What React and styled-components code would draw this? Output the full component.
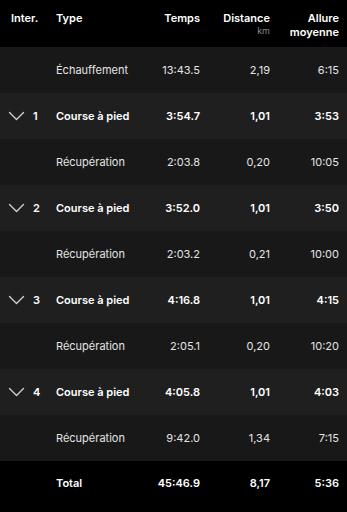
import styled, { createGlobalStyle } from "styled-components";

const GlobalStyle = createGlobalStyle`
  body {
    margin: 0;
    background: #000;
    font-family: Inter, "Noto Sans", "Liberation Sans", sans-serif;
    -webkit-font-smoothing: antialiased;
  }
`;

const rows = [
  { type: "Échauffement", time: "13:43.5", dist: "2,19", pace: "6:15" },
  { lap: 1, type: "Course à pied", time: "3:54.7", dist: "1,01", pace: "3:53" },
  { type: "Récupération", time: "2:03.8", dist: "0,20", pace: "10:05" },
  { lap: 2, type: "Course à pied", time: "3:52.0", dist: "1,01", pace: "3:50" },
  { type: "Récupération", time: "2:03.2", dist: "0,21", pace: "10:00" },
  { lap: 3, type: "Course à pied", time: "4:16.8", dist: "1,01", pace: "4:15" },
  { type: "Récupération", time: "2:05.1", dist: "0,20", pace: "10:20" },
  { lap: 4, type: "Course à pied", time: "4:05.8", dist: "1,01", pace: "4:03" },
  { type: "Récupération", time: "9:42.0", dist: "1,34", pace: "7:15" },
];

function Chevron() {
  return (
    <svg width="17" height="10" viewBox="0 0 17 10">
      <path
        d="M1.5 1.5 L8.5 8.5 L15.5 1.5"
        fill="none"
        stroke="#cfcfcf"
        strokeWidth="1.4"
        strokeLinecap="round"
        strokeLinejoin="round"
      />
    </svg>
  );
}

export default function App() {
  return (
    <Table>
      <GlobalStyle />
      <Header>
        <Cell>Inter.</Cell>
        <Cell>Type</Cell>
        <Num>Temps</Num>
        <Num>
          Distance
          <Unit>km</Unit>
        </Num>
        <Num>
          Allure
          <br />
          moyenne
        </Num>
      </Header>
      {rows.map((r, i) => (
        <Row key={i} $lap={!!r.lap}>
          <LapCell>
            {r.lap && (
              <>
                <Chevron />
                <span>{r.lap}</span>
              </>
            )}
          </LapCell>
          <Cell>{r.type}</Cell>
          <Num>{r.time}</Num>
          <Num>{r.dist}</Num>
          <Num>{r.pace}</Num>
        </Row>
      ))}
      <Total>
        <Cell />
        <Cell>Total</Cell>
        <Num>45:46.9</Num>
        <Num>8,17</Num>
        <Num>5:36</Num>
      </Total>
    </Table>
  );
}

const Table = styled.div`
  width: 347px;
  height: 512px;
  overflow: hidden;
  background: #000;
  color: #fff;
  font-size: 11px;
`;

const Grid = styled.div`
  display: grid;
  grid-template-columns: 56px 74px 70px 70px 69px;
  padding-right: 8px;
  align-items: center;
  box-sizing: border-box;
`;

const Header = styled(Grid)`
  height: 47px;
  align-items: start;
  font-weight: 600;
  line-height: 14px;
  padding-top: 11px;
  & > div:first-child {
    padding-left: 11px;
  }
`;

const Row = styled(Grid)`
  height: 46px;
  background: ${(p) => (p.$lap ? "#1f1f1f" : "#181818")};
  font-weight: ${(p) => (p.$lap ? 600 : 400)};
  color: ${(p) => (p.$lap ? "#fff" : "#e4e4e4")};
`;

const Total = styled(Grid)`
  height: 51px;
  padding-bottom: 7px;
  background: #000;
  font-weight: 600;
`;

const Cell = styled.div`
  white-space: nowrap;
`;

const Num = styled.div`
  text-align: right;
  white-space: nowrap;
`;

const Unit = styled.div`
  font-size: 9px;
  font-weight: 400;
  color: #8a8a8a;
  line-height: 12px;
`;

const LapCell = styled.div`
  display: flex;
  align-items: center;
  gap: 8px;
  padding-left: 8px;
  font-weight: 600;
  svg {
    display: block;
  }
`;
